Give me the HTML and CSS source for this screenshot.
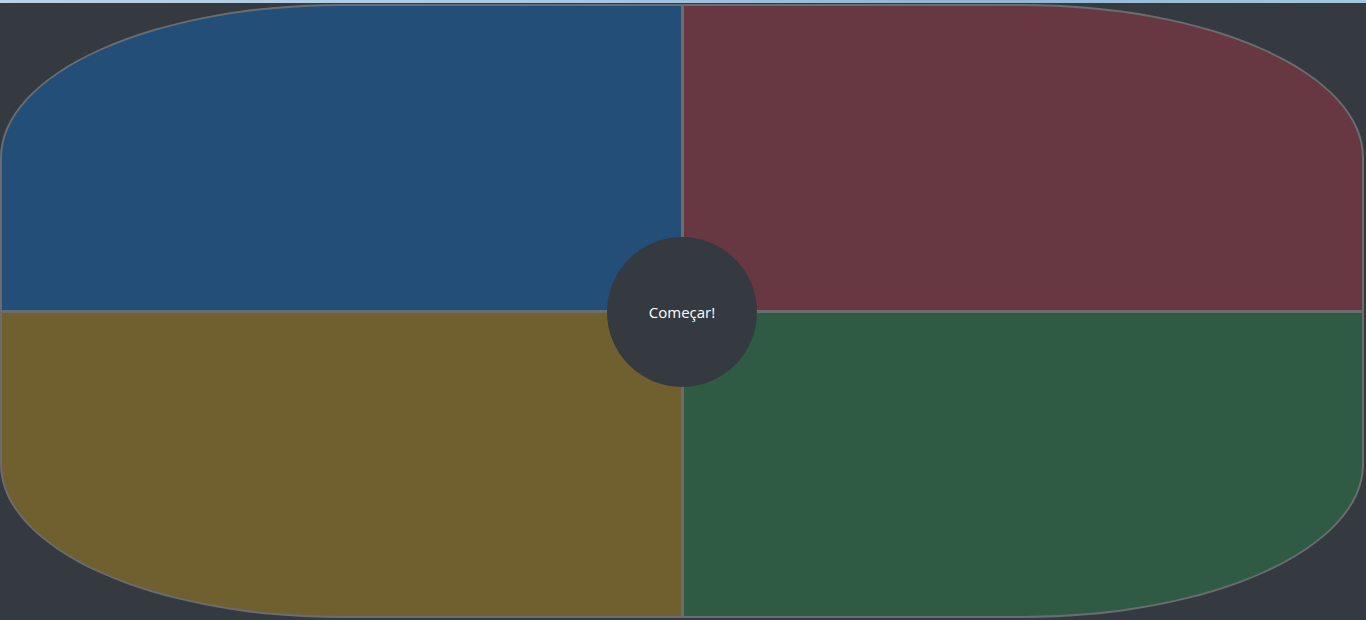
FILE: index.html
```html
<!DOCTYPE html>
<html lang="pt">
<head>
<meta charset="utf-8">
<title>Genius</title>
<link rel="stylesheet" href="styles.css">
</head>
<body>
<div class="topstrip"></div>
<main class="stage">
  <div class="board">
    <div class="pad pad-blue"></div>
    <div class="pad pad-red"></div>
    <div class="pad pad-yellow"></div>
    <div class="pad pad-green"></div>
  </div>
  <button class="start">Começar!</button>
</main>
</body>
</html>
```
FILE: styles.css
```css
html, body {
  margin: 0;
  padding: 0;
  background: #343a40;
  height: 100%;
  overflow: hidden;
}
body {
  font-family: "Open Sans", "Noto Sans", sans-serif;
}
.topstrip {
  height: 3px;
  background: linear-gradient(90deg, #b9d3e8 0%, #a9c9e3 40%, #8fb4d4 70%, #a4c6e2 100%);
}
.stage {
  position: relative;
  width: 1364px;
  height: 614px;
  margin-top: 1px;
}
.board {
  box-sizing: border-box;
  width: 100%;
  height: 100%;
  display: grid;
  grid-template-columns: 1fr 1fr;
  grid-template-rows: 1fr 1fr;
  gap: 3px;
  background: #6a6c6f;
  border: 2px solid #6a6c6f;
  border-radius: 25%;
  overflow: hidden;
}
.pad-blue { background: #234e78; }
.pad-red { background: #673841; }
.pad-yellow { background: #705f2f; }
.pad-green { background: #2f5b45; }
.start {
  position: absolute;
  left: 607px;
  top: 233px;
  width: 150px;
  height: 150px;
  border: none;
  border-radius: 50%;
  background: #343a40;
  color: #ffffff;
  font-family: "Open Sans", "Noto Sans", sans-serif;
  font-size: 15px;
  padding: 0;
  cursor: pointer;
}
```
